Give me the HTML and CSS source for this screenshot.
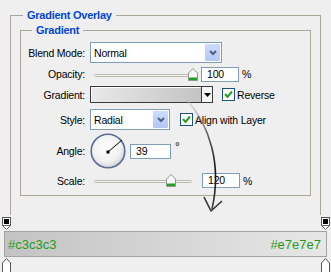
FILE: index.html
```html
<!DOCTYPE html>
<html lang="en">
<head>
  <meta charset="UTF-8">
  <meta name="viewport" content="width=device-width, initial-scale=1.0">
  <title>Gradient Overlay</title>
  <link rel="stylesheet" href="styles.css">
</head>
<body>

<div class="group outer">
  <div class="group-title">Gradient Overlay</div>

  <div class="group inner">
    <div class="group-title inner-title">Gradient</div>

    <div class="form">
      <label class="lbl">Blend Mode:</label>
      <div class="ctl">
        <div class="select select-blend">
          <span class="val">Normal</span>
          <span class="drop"><svg width="8" height="6" viewBox="0 0 8 6"><polyline points="1,1 4,4 7,1" fill="none" stroke="#4d6185" stroke-width="2"/></svg></span>
        </div>
      </div>

      <label class="lbl">Opacity:</label>
      <div class="ctl">
        <div class="slider">
          <div class="track"></div>
          <span class="thumb" style="left: 98px"><svg width="10" height="13" viewBox="0 0 10 13"><path d="M0.5 12.5 V5 L5 0.5 L9.5 5 V12.5 Z" fill="#fbfbfb" stroke="#8d9a8d"/><rect x="1" y="9.5" width="8" height="2.5" fill="#21a121"/></svg></span>
        </div>
        <div class="num">100</div>
        <span class="unit">%</span>
      </div>

      <label class="lbl">Gradient:</label>
      <div class="ctl">
        <div class="grad">
          <span class="grad-fill"></span>
          <span class="grad-drop"><svg width="7" height="4" viewBox="0 0 7 4"><polygon points="0,0 7,0 3.5,4" fill="#000"/></svg></span>
        </div>
        <span class="check check-reverse"><svg width="11" height="11" viewBox="0 0 11 11"><polyline points="2,5 4.5,8 9,2.5" fill="none" stroke="#21a121" stroke-width="2"/></svg></span>
        <span class="check-text">Reverse</span>
      </div>

      <label class="lbl">Style:</label>
      <div class="ctl">
        <div class="select select-style">
          <span class="val">Radial</span>
          <span class="drop"><svg width="8" height="6" viewBox="0 0 8 6"><polyline points="1,1 4,4 7,1" fill="none" stroke="#4d6185" stroke-width="2"/></svg></span>
        </div>
        <span class="check check-align"><svg width="11" height="11" viewBox="0 0 11 11"><polyline points="2,5 4.5,8 9,2.5" fill="none" stroke="#21a121" stroke-width="2"/></svg></span>
        <span class="check-text">Align with Layer</span>
      </div>

      <label class="lbl">Angle:</label>
      <div class="ctl">
        <svg class="dial" width="36" height="36" viewBox="0 0 36 36">
          <defs>
            <radialGradient id="dialFill" cx="45%" cy="40%" r="60%">
              <stop offset="0" stop-color="#ffffff"/>
              <stop offset="0.7" stop-color="#f1f1f1"/>
              <stop offset="1" stop-color="#d4d4d4"/>
            </radialGradient>
          </defs>
          <circle cx="18" cy="18" r="16.8" fill="url(#dialFill)" stroke="#5b6d96" stroke-width="1.6"/>
          <line x1="18" y1="19" x2="32" y2="7" stroke="#000" stroke-width="1"/>
          <rect x="16.5" y="17.5" width="3" height="3" fill="#000"/>
        </svg>
        <div class="num num-angle">39</div>
        <span class="deg">°</span>
      </div>

      <label class="lbl">Scale:</label>
      <div class="ctl">
        <div class="slider">
          <div class="track"></div>
          <span class="thumb" style="left: 76px"><svg width="10" height="13" viewBox="0 0 10 13"><path d="M0.5 12.5 V5 L5 0.5 L9.5 5 V12.5 Z" fill="#fbfbfb" stroke="#8d9a8d"/><rect x="1" y="9.5" width="8" height="2.5" fill="#21a121"/></svg></span>
        </div>
        <div class="num num-scale">120</div>
        <span class="unit">%</span>
      </div>
    </div>
  </div>
</div>

<div class="stops stops-top">
  <svg width="9" height="13" viewBox="0 0 9 13"><rect x="0.5" y="0.5" width="8" height="8" fill="#fff" stroke="#555"/><rect x="2" y="2" width="5" height="5" fill="#000"/><polygon points="0.5,8.5 8.5,8.5 4.5,12.5" fill="#fff" stroke="#666"/></svg>
  <svg width="9" height="13" viewBox="0 0 9 13"><rect x="0.5" y="0.5" width="8" height="8" fill="#fff" stroke="#555"/><rect x="2" y="2" width="5" height="5" fill="#000"/><polygon points="0.5,8.5 8.5,8.5 4.5,12.5" fill="#fff" stroke="#666"/></svg>
</div>

<div class="bar">
  <span class="hex">#c3c3c3</span>
  <span class="hex">#e7e7e7</span>
</div>

<div class="stops stops-bottom">
  <svg width="9" height="16" viewBox="0 0 9 16"><path d="M4.5 0.5 L8.5 5 V15.5 H0.5 V5 Z" fill="#fff" stroke="#555"/></svg>
  <svg width="9" height="16" viewBox="0 0 9 16"><path d="M4.5 0.5 L8.5 5 V15.5 H0.5 V5 Z" fill="#fff" stroke="#555"/></svg>
</div>

<!-- annotation arrow drawn over the dialog -->
<svg class="arrow" width="331" height="272" viewBox="0 0 331 272">
  <defs>
    <linearGradient id="arrowInk" gradientUnits="userSpaceOnUse" x1="0" y1="95" x2="0" y2="215">
      <stop offset="0" stop-color="#d8d8d8" stop-opacity="0.3"/>
      <stop offset="0.3" stop-color="#666"/>
      <stop offset="0.65" stop-color="#111"/>
      <stop offset="1" stop-color="#444"/>
    </linearGradient>
  </defs>
  <path d="M186 99 C 210 125, 222 165, 212 209" fill="none" stroke="url(#arrowInk)" stroke-width="1.6"/>
  <path d="M204 197 L211 211 L222 201" fill="none" stroke="#333" stroke-width="1.6" stroke-linejoin="round"/>
</svg>

</body>
</html>
```

FILE: styles.css
```css
* {
  box-sizing: border-box;
}

body {
  margin: 0;
  width: 331px;
  height: 272px;
  overflow: hidden;
  position: relative;
  background: #efefef;
  color: #000;
  font-family: "Liberation Sans", Arial, sans-serif;
  font-size: 10.5px;
  letter-spacing: -0.2px;
}

/* group boxes */
.group {
  border: 1px solid #aca899;
}

.outer {
  margin: 15px 0 0 10px;
  width: 311px;
  height: 200px;
  border-bottom: 0;
}

.inner {
  margin: 8px 0 0 9px;
  width: 291px;
  height: 166px;
}

.group-title {
  display: block;
  width: fit-content;
  margin: -8px 0 0 12px;
  padding: 0 4px;
  height: 14px;
  line-height: 14px;
  background: #efefef;
  color: #0046d5;
  font-size: 11px;
  font-weight: bold;
  letter-spacing: -0.25px;
}

.inner-title {
  margin-left: 11px;
}

/* form rows */
.form {
  margin-top: 5px;
  display: grid;
  grid-template-columns: 65px 1fr;
  grid-template-rows: 21px 22px 19px 31px 32px 27px;
  column-gap: 4px;
  align-items: center;
}

.lbl {
  text-align: right;
  padding-right: 1px;
}

.ctl {
  display: flex;
  align-items: center;
  height: 100%;
}

/* dropdowns */
.select {
  display: flex;
  align-items: center;
  height: 21px;
  padding: 1px;
  border: 1px solid #7f9db9;
  background: #fff;
}

.select-blend {
  width: 132px;
}

.select-style {
  width: 80px;
}

.select .val {
  flex: 1;
  padding-left: 2px;
}

.drop {
  display: flex;
  align-items: center;
  justify-content: center;
  width: 15px;
  height: 17px;
  border-radius: 1px;
  background: linear-gradient(#cddcfd, #b3c7f6);
}

/* sliders */
.slider {
  position: relative;
  width: 107px;
  height: 13px;
  margin-right: 4px;
}

.track {
  margin: 6px 0 0 4px;
  width: 98px;
  height: 3px;
  border: 1px solid #bab8ad;
  border-radius: 2px;
  background: #f7f6f1;
}

.thumb {
  position: absolute;
  top: 0;
  display: block;
  line-height: 0;
}

.num {
  width: 38px;
  height: 15px;
  padding-left: 5px;
  line-height: 13px;
  border: 1px solid #7f9db9;
  background: #fff;
}

.num-angle {
  width: 41px;
  margin-left: 4px;
}

.num-scale {
  margin-left: 1px;
}

.unit {
  margin-left: 3px;
}

.deg {
  align-self: flex-start;
  margin: 5px 0 0 4px;
  font-size: 12px;
}

/* gradient picker */
.grad {
  display: flex;
  width: 123px;
  height: 17px;
  border: 1px solid #3a3a3a;
  background: #fff;
}

.grad-fill {
  flex: 1;
  border-right: 1px solid #3a3a3a;
  box-shadow: inset 1px 1px 0 #fff;
  background: linear-gradient(to right, #e9e9e9, #c3c3c3);
}

.grad-drop {
  display: flex;
  align-items: center;
  justify-content: center;
  width: 10px;
  background: #f4f4f4;
}

/* checkboxes */
.check {
  display: flex;
  align-items: center;
  justify-content: center;
  width: 13px;
  height: 13px;
  border: 1px solid #1c5180;
  background: #fff;
}

.check-reverse {
  margin-left: 9px;
}

.check-align {
  margin-left: 10px;
}

.check-text {
  margin-left: 2px;
}

.dial {
  display: block;
}

/* gradient stops and bar */
.stops {
  display: flex;
  justify-content: space-between;
  padding: 0 1px 0 2px;
  line-height: 0;
}

.stops-top {
  margin-top: 2px;
  height: 14px;
}

.bar {
  display: flex;
  justify-content: space-between;
  align-items: center;
  margin: 0 4px;
  height: 26px;
  padding: 0 5px 0 3px;
  border: 1px solid #a3a3a3;
  background: linear-gradient(to right, #c3c3c3, #e7e7e7);
}

.hex {
  color: #259b1c;
  font-size: 13px;
  letter-spacing: 0;
}

.stops-bottom {
  margin-top: 1px;
}

.arrow {
  position: absolute;
  top: 0;
  left: 0;
  pointer-events: none;
}
```
